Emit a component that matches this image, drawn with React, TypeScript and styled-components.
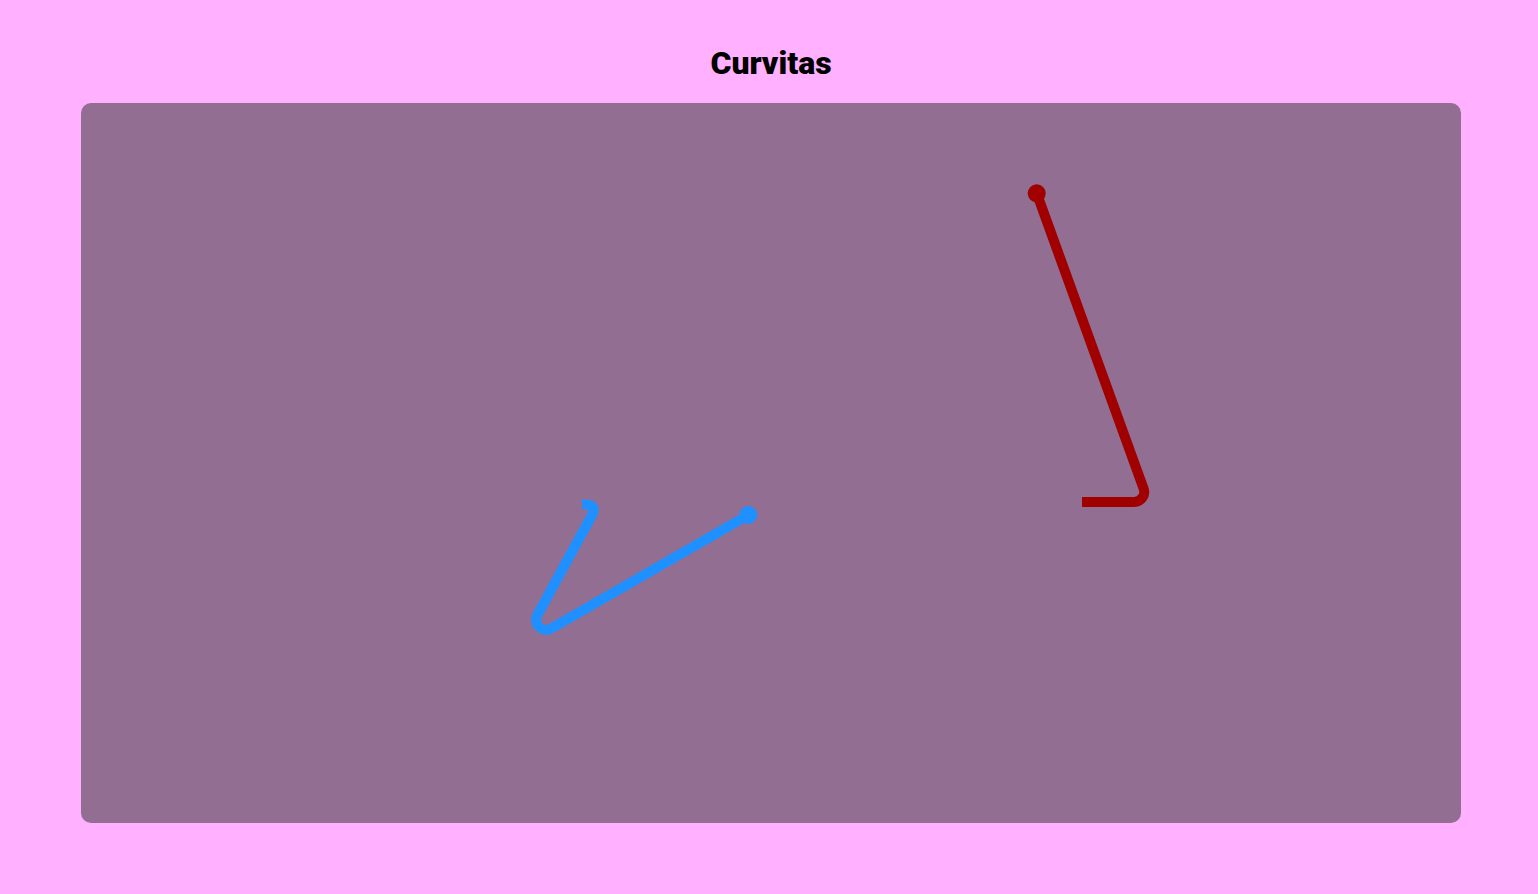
import React from "react";
import styled, { createGlobalStyle } from "styled-components";

const GlobalStyle = createGlobalStyle`
  html, body {
    margin: 0;
    padding: 0;
    background: #ffb0ff;
    font-family: Roboto, "Liberation Sans", sans-serif;
  }
`;

const Page = styled.div`
  width: 1538px;
  height: 894px;
  background: #ffb0ff;
  box-sizing: border-box;
  padding: 45px 0 0 81px;
`;

const Column = styled.main`
  width: 1380px;
  display: flex;
  flex-direction: column;
  gap: 21px;
`;

const Title = styled.h1`
  margin: 0;
  text-align: center;
  font-family: Roboto, "Liberation Sans", sans-serif;
  font-weight: 900;
  font-size: 32px;
  line-height: 37px;
  color: #000;
`;

const Board = styled.section`
  width: 1380px;
  height: 720px;
  border-radius: 10px;
  background: #936e93;
  overflow: hidden;
`;

const Drawing = styled.svg`
  display: block;
  width: 100%;
  height: 100%;
`;

type Curve = { d: string; color: string; dot: [number, number] };

// coordinates relative to the board (page minus 81,103)
const curves: Curve[] = [
  {
    color: "#1e90ff",
    d: "M501,401.5 Q518,400.5 510.5,413 L456.4,512 A10,10 0 0 0 470.2,525.5 L667.3,412",
    dot: [667.3, 412],
  },
  {
    color: "#a00000",
    d: "M955.7,90.3 L1062.6,385.6 A10,10 0 0 1 1053.2,399 L1001,399",
    dot: [955.7, 90.3],
  },
];

export default function App() {
  return (
    <>
      <GlobalStyle />
      <Page>
        <Column>
          <Title>Curvitas</Title>
          <Board>
            <Drawing viewBox="0 0 1380 720">
              {curves.map((c, i) => (
                <g key={i}>
                  <path d={c.d} fill="none" stroke={c.color} strokeWidth={10} strokeLinecap="butt" strokeLinejoin="round" />
                  <circle cx={c.dot[0]} cy={c.dot[1]} r={9} fill={c.color} />
                </g>
              ))}
            </Drawing>
          </Board>
        </Column>
      </Page>
    </>
  );
}
